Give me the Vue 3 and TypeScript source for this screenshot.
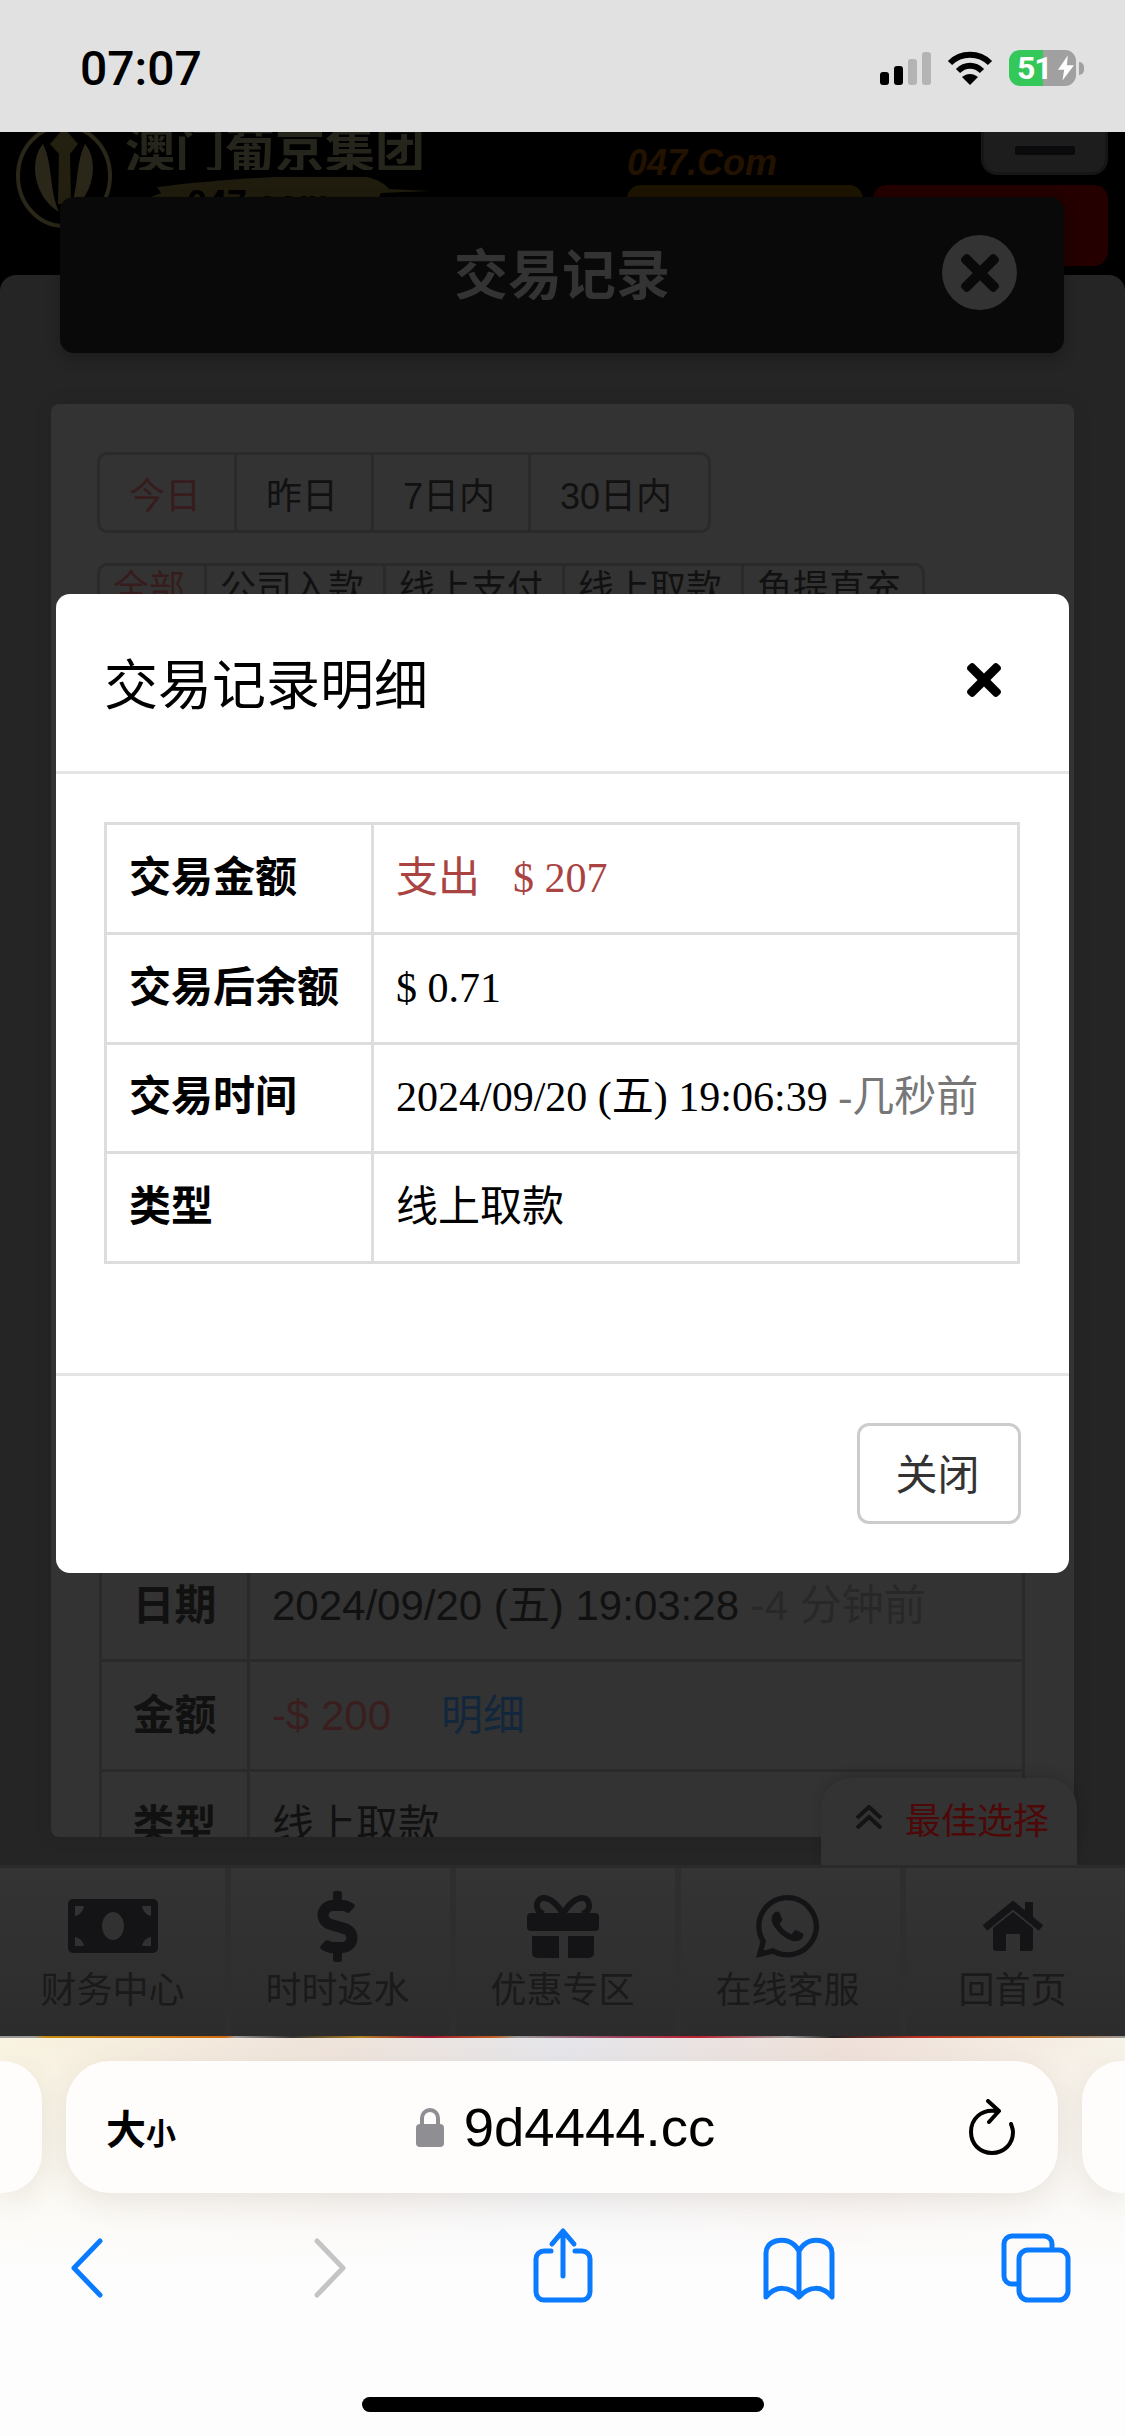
<script setup lang="ts">
const rangeTabs = ['今日', '昨日', '7日内', '30日内']
const typeTabs = ['全部', '公司入款', '线上支付', '线上取款', '鱼提直充']

const navItems = [
  { key: 'money', label: '财务中心' },
  { key: 'dollar', label: '时时返水' },
  { key: 'gift', label: '优惠专区' },
  { key: 'whatsapp', label: '在线客服' },
  { key: 'home', label: '回首页' }
]

const timesPath =
  'M242.72 256l100.07-100.07c12.28-12.28 12.28-32.19 0-44.48l-22.24-22.24c-12.28-12.28-32.19-12.28-44.48 0L176 189.28 75.93 89.21c-12.28-12.28-32.19-12.28-44.48 0L9.21 111.45c-12.28 12.28-12.28 32.19 0 44.48L109.28 256 9.21 356.07c-12.28 12.28-12.28 32.19 0 44.48l22.24 22.24c12.28 12.28 32.2 12.28 44.48 0L176 322.72l100.07 100.07c12.28 12.28 32.2 12.28 44.48 0l22.24-22.24c12.28-12.28 12.28-32.19 0-44.48L242.72 256z'
</script>

<template>
  <div class="phone">
    <div class="status-bar">
      <span class="clock">07:07</span>
      <div class="status-icons">
        <svg class="signal" width="52" height="33" viewBox="0 0 52 33">
          <rect x="0" y="20" width="9" height="13" rx="3" fill="#000" />
          <rect x="14" y="14" width="9" height="19" rx="3" fill="#000" />
          <rect x="28" y="7" width="9" height="26" rx="3" fill="#b4b4b4" />
          <rect x="42" y="0" width="9" height="33" rx="3" fill="#b4b4b4" />
        </svg>
        <svg class="wifi" width="46" height="34" viewBox="0 0 46 34" fill="none" stroke="#000" stroke-width="6">
          <path d="M3 12 C14 1 32 1 43 12" />
          <path d="M11 20 C18 13 28 13 35 20" />
          <path d="M23 34 L15 26 C20 22 26 22 31 26 Z" fill="#000" stroke="none" />
        </svg>
        <div class="battery">
          <div class="battery-level">
            <span class="battery-text">51</span>
            <svg class="bolt" width="16" height="28" viewBox="0 0 18 28">
              <path d="M11 0 L0 16 H7 L5 28 L18 11 H10 Z" fill="#fff" />
            </svg>
          </div>
          <span class="battery-nub"></span>
        </div>
      </div>
    </div>

    <div class="page">
      <header class="site-header">
        <div class="brand">
          <svg class="emblem" width="100" height="106" viewBox="0 0 100 106" fill="none">
            <ellipse cx="49" cy="52" rx="46" ry="50" stroke="#2a2618" stroke-width="4" />
            <path d="M49 4 L63 20 L55 30 L56 80 L43 80 L44 30 L35 20 Z" fill="#24200f" />
            <path d="M28 20 C14 36 18 72 44 88 C34 66 38 40 28 20 Z" fill="#2a2618" />
            <path d="M70 20 C84 36 80 72 54 88 C64 66 60 40 70 20 Z" fill="#2a2618" />
          </svg>
          <div class="brand-text">
            <div class="brand-name">澳门葡京集团</div>
            <svg class="swoosh" width="300" height="44" viewBox="0 0 300 44">
              <path d="M26 10 C90 2 180 -4 236 0 C246 2 256 8 258 12 L300 14 L250 16 L240 36 H24 L34 22 L20 20 L30 16 Z" fill="#1f1c0d" />
              <text x="56" y="39" class="swoosh-text">047.com</text>
            </svg>
          </div>
        </div>
        <div class="promo">
          <div class="promo-top">
            <span class="promo-url">047.Com</span>
            <div class="menu-btn"><i></i></div>
          </div>
          <div class="promo-btns">
            <span class="promo-btn yellow"></span>
            <span class="promo-btn red"></span>
          </div>
        </div>
      </header>

      <main class="content">
        <div class="title-bar">
          <span class="title-text">交易记录</span>
          <span class="title-close">
            <svg width="38" height="38" viewBox="0 80 352 352"><path :d="timesPath" fill="#0a090a" /></svg>
          </span>
        </div>

        <section class="panel">
          <div class="tabs">
            <span v-for="(t, i) in rangeTabs" :key="t" class="tab" :class="{ active: i === 0 }">{{ t }}</span>
          </div>
          <div class="tabs types">
            <span v-for="(t, i) in typeTabs" :key="t" class="tab" :class="{ active: i === 0 }">{{ t }}</span>
          </div>

          <table class="record">
            <tbody>
              <tr>
                <th>日期</th>
                <td>2024/09/20 (五) 19:03:28 <span class="muted">-4 分钟前</span></td>
              </tr>
              <tr>
                <th>金额</th>
                <td><span class="minus">-$ 200</span><span class="detail-link">明细</span></td>
              </tr>
              <tr>
                <th>类型</th>
                <td>线上取款</td>
              </tr>
            </tbody>
          </table>
        </section>

        <div class="best-tab">
          <svg width="26" height="24" viewBox="0 0 26 24" fill="none" stroke="#141414" stroke-width="4">
            <path d="M1 13 L13 2 L25 13" />
            <path d="M1 23 L13 12 L25 23" />
          </svg>
          <span>最佳选择</span>
        </div>
      </main>

      <nav class="bottom-nav">
        <a v-for="item in navItems" :key="item.key" class="nav-item">
          <span class="nav-icon">
            <svg v-if="item.key === 'money'" width="90" height="54" viewBox="0 0 90 54">
              <path
                fill-rule="evenodd"
                fill="#141416"
                d="M5 0 H85 a5 5 0 0 1 5 5 V49 a5 5 0 0 1 -5 5 H5 a5 5 0 0 1 -5 -5 V5 a5 5 0 0 1 5 -5 Z
                   M45 13 a11 14 0 1 0 0.01 0 Z
                   M7 7 V17 C12 16 15 12 16 7 Z
                   M83 7 V17 C78 16 75 12 74 7 Z
                   M7 47 V38 C12 39 15 42 16 47 Z
                   M83 47 V38 C78 39 75 42 74 47 Z"
              />
            </svg>
            <svg v-else-if="item.key === 'dollar'" width="41" height="71" viewBox="0 0 288 512">
              <path
                fill="#141416"
                d="M209.2 233.4l-108-31.6C88.7 198.2 80 186.5 80 173.5c0-16.3 13.2-29.5 29.5-29.5h66.3c12.2 0 24.2 3.7 34.2 10.5 6.1 4.1 14.3 3.1 19.5-2l34.8-34c7.1-6.9 6.1-18.4-1.8-24.5C238 74.8 207.4 64.1 176 64V16c0-8.8-7.2-16-16-16h-32c-8.8 0-16 7.2-16 16v48h-2.5C45.8 64-5.4 118.7.5 183.6c4.2 46.1 39.4 83.6 83.8 96.6l102.5 30c12.5 3.7 21.2 15.3 21.2 28.3 0 16.3-13.2 29.5-29.5 29.5h-66.3C100 368 88 364.3 78 357.5c-6.1-4.1-14.3-3.1-19.5 2l-34.8 34c-7.1 6.9-6.1 18.4 1.8 24.5 24.5 19.2 55.1 29.9 86.5 30v48c0 8.8 7.2 16 16 16h32c8.8 0 16-7.2 16-16v-48.2c46.6-.9 90.3-28.6 105.7-72.7 21.5-61.6-14.6-124.8-72.5-141.7z"
              />
            </svg>
            <svg v-else-if="item.key === 'gift'" width="72" height="63" viewBox="0 0 72 63">
              <path d="M36 19 C30 8 22 3 17 3 C8 3 7 17 17 19 M36 19 C42 8 50 3 55 3 C64 3 65 17 55 19" fill="none" stroke="#141416" stroke-width="6" />
              <rect x="0" y="18" width="72" height="18" rx="4" fill="#141416" />
              <path d="M5 41 H32 V63 H10 a5 5 0 0 1 -5 -5 Z" fill="#141416" />
              <path d="M41 41 H67 V58 a5 5 0 0 1 -5 5 H41 Z" fill="#141416" />
            </svg>
            <svg v-else-if="item.key === 'whatsapp'" width="63" height="63" viewBox="0 32 448 448">
              <path
                fill="#141416"
                d="M380.9 97.1C339 55.1 283.2 32 223.9 32c-122.4 0-222 99.6-222 222 0 39.1 10.2 77.3 29.6 111L0 480l117.7-30.9c32.4 17.7 68.9 27 106.1 27h.1c122.3 0 224.1-99.6 224.1-222 0-59.3-25.2-115-67.1-157zm-157 341.6c-33.2 0-65.7-8.9-94-25.7l-6.7-4-69.8 18.3L72 359.2l-4.4-7c-18.5-29.4-28.2-63.3-28.2-98.2 0-101.7 82.8-184.5 184.6-184.5 49.3 0 95.6 19.2 130.4 54.1 34.8 34.9 56.2 81.2 56.1 130.5 0 101.8-84.9 184.6-186.6 184.6zm101.2-138.2c-5.5-2.8-32.8-16.2-37.9-18-5.1-1.9-8.8-2.8-12.5 2.8-3.7 5.6-14.3 18-17.6 21.8-3.2 3.7-6.5 4.2-12 1.4-32.6-16.3-54-29.1-75.5-66-5.7-9.8 5.7-9.1 16.3-30.3 1.8-3.7.9-6.9-.5-9.7-1.4-2.8-12.5-30.1-17.1-41.2-4.5-10.8-9.1-9.3-12.5-9.5-3.2-.2-6.9-.2-10.6-.2-3.7 0-9.7 1.4-14.8 6.9-5.1 5.6-19.4 19-19.4 46.3 0 27.3 19.9 53.7 22.6 57.4 2.8 3.7 39.1 59.7 94.8 83.8 35.2 15.2 49 16.5 66.6 13.9 10.7-1.6 32.8-13.4 37.4-26.4 4.6-13 4.6-24.1 3.2-26.4-1.3-2.5-5-3.9-10.5-6.6z"
              />
            </svg>
            <svg v-else width="62" height="50" viewBox="0 0 62 50">
              <rect x="43" y="1" width="8" height="16" fill="#141416" />
              <path d="M3 27 L31 4 L59 27" fill="none" stroke="#141416" stroke-width="7" />
              <path d="M11 27 L31 11 L51 27 V47 a3 3 0 0 1 -3 3 H38 V33 H24 V50 H14 a3 3 0 0 1 -3 -3 Z" fill="#141416" />
            </svg>
          </span>
          <span class="nav-label">{{ item.label }}</span>
        </a>
      </nav>
      <div class="peek-strip"></div>

      <div class="modal">
        <div class="modal-header">
          <span class="modal-title">交易记录明细</span>
          <svg class="modal-close" width="34" height="34" viewBox="0 80 352 352"><path :d="timesPath" fill="#000" /></svg>
        </div>
        <div class="modal-body">
          <table class="detail">
            <tbody>
              <tr>
                <th>交易金额</th>
                <td class="danger"><span class="out">支出</span>$ 207</td>
              </tr>
              <tr>
                <th>交易后余额</th>
                <td>$ 0.71</td>
              </tr>
              <tr>
                <th>交易时间</th>
                <td>2024/09/20 (五) 19:06:39 <span class="ago">-几秒前</span></td>
              </tr>
              <tr>
                <th>类型</th>
                <td>线上取款</td>
              </tr>
            </tbody>
          </table>
        </div>
        <div class="modal-footer">
          <button class="close-btn" type="button">关闭</button>
        </div>
      </div>
    </div>

    <div class="browser">
      <div class="url-row">
        <span class="side-card left"></span>
        <div class="url-bar">
          <span class="aa">大<small>小</small></span>
          <span class="address">
            <svg width="28" height="39" viewBox="0 0 28 39" fill="none">
              <path d="M6 18 V10 a8 8 0 0 1 16 0 V18" stroke="#8e8e93" stroke-width="4" />
              <rect x="0" y="16" width="28" height="23" rx="4" fill="#8e8e93" />
            </svg>
            <span class="host">9d4444.cc</span>
          </span>
          <svg class="reload" width="46" height="56" viewBox="0 0 46 56" fill="none" stroke="#000" stroke-width="4" stroke-linecap="round" stroke-linejoin="round">
            <path d="M27 12 C12 10 2 20 2 33 C2 45 11 54 23 54 C35 54 44 45 44 33 C44 30 43 28 42 25" />
            <path d="M19 2 L30 12 L20 23" />
          </svg>
        </div>
        <span class="side-card right"></span>
      </div>

      <div class="toolbar">
        <svg width="80" height="80" viewBox="0 0 80 80" fill="none" stroke="#0a7aff" stroke-width="5" stroke-linecap="round" stroke-linejoin="round">
          <path d="M53 13 L27 40 L53 67" transform="translate(0 2)" />
        </svg>
        <svg width="80" height="80" viewBox="0 0 80 80" fill="none" stroke="#c4c4c4" stroke-width="5" stroke-linecap="round" stroke-linejoin="round">
          <path d="M32 13 L58 40 L32 67" transform="translate(0 2)" />
        </svg>
        <svg width="80" height="80" viewBox="0 0 80 80" fill="none" stroke="#0a7aff" stroke-width="5" stroke-linecap="round" stroke-linejoin="round">
          <path d="M28 25 H21 a8 8 0 0 0 -8 8 V66 a8 8 0 0 0 8 8 H59 a8 8 0 0 0 8 -8 V33 a8 8 0 0 0 -8 -8 H52" />
          <path d="M40 50 V6 M29 18 L40 5 L51 18" />
        </svg>
        <svg width="80" height="80" viewBox="0 0 80 80" fill="none" stroke="#0a7aff" stroke-width="5" stroke-linejoin="round">
          <path d="M38 25 V70 M38 25 C32 14 22 13 15 15 C8 17 5 22 5 27 V71 C15 59 28 60 38 71 C48 60 61 59 71 71 V27 C71 22 68 17 61 15 C54 13 44 14 38 25 Z" />
        </svg>
        <svg width="80" height="80" viewBox="6 0 80 80" fill="none" stroke="#0a7aff" stroke-width="5">
          <path d="M24 58 H19 a8 8 0 0 1 -8 -8 V18 a8 8 0 0 1 8 -8 H51 a8 8 0 0 1 8 8 V24" />
          <rect x="26" y="24" width="49" height="50" rx="9" />
        </svg>
      </div>

      <div class="home-bar"></div>
    </div>
  </div>
</template>

<style>
html,
body {
  margin: 0;
  background: #fff;
}
</style>

<style scoped>
.phone {
  position: relative;
  width: 1125px;
  height: 2436px;
  overflow: hidden;
  display: flex;
  flex-direction: column;
  font-family: "Liberation Sans", "Noto Sans CJK SC", sans-serif;
}

.status-bar {
  height: 132px;
  flex-shrink: 0;
  background: #e1e1e1;
  display: flex;
  align-items: center;
  justify-content: space-between;
  padding: 0 41px 0 80px;
  box-sizing: border-box;
}

.clock {
  font-family: Roboto, sans-serif;
  font-weight: 500;
  font-size: 48px;
  color: #000;
  margin-top: 4px;
}

.status-icons {
  display: flex;
  align-items: center;
  margin-top: 4px;
}

.signal {
  margin-right: 15px;
}

.wifi {
  margin-right: 16px;
}

.battery {
  display: flex;
  align-items: center;
  gap: 3px;
}

.battery-level {
  width: 67px;
  height: 36px;
  border-radius: 11px;
  background: linear-gradient(90deg, #34c759 34px, #a0a0a0 34px);
  display: flex;
  align-items: center;
  padding-left: 8px;
  box-sizing: border-box;
}

.battery-text {
  font-family: Roboto, sans-serif;
  font-weight: 700;
  font-size: 32px;
  letter-spacing: -1px;
  line-height: 36px;
  color: #fff;
}

.bolt {
  margin-left: 6px;
}

.battery-nub {
  width: 5px;
  height: 13px;
  border-radius: 0 6px 6px 0;
  background: #a0a0a0;
}

.page {
  position: relative;
  flex: 1;
  min-height: 0;
  display: flex;
  flex-direction: column;
  background: #000;
}

.site-header {
  height: 143px;
  flex-shrink: 0;
  overflow: hidden;
  display: flex;
  justify-content: space-between;
  padding: 0 17px 0 15px;
  box-sizing: border-box;
}

.brand {
  display: flex;
  gap: 10px;
}

.emblem {
  margin-top: -8px;
}

.brand-name {
  width: 300px;
  height: 38px;
  font-size: 50px;
  line-height: 38px;
  font-weight: 700;
  color: #26251c;
  white-space: nowrap;
  overflow: hidden;
  display: flex;
  align-items: flex-end;
}

.swoosh {
  display: block;
  margin: 7px 0 0 6px;
}

.swoosh-text {
  font-family: "Liberation Sans", sans-serif;
  font-weight: 700;
  font-size: 36px;
  fill: #000;
}

.promo {
  width: 481px;
}

.promo-top {
  height: 53px;
  display: flex;
  justify-content: space-between;
  align-items: flex-start;
}

.promo-url {
  font-size: 36px;
  font-weight: 700;
  font-style: italic;
  line-height: 36px;
  margin-top: 13px;
  color: #241200;
}

.menu-btn {
  width: 127px;
  height: 43px;
  background: #1d1d1d;
  border: 3px solid #161616;
  border-top: 0;
  border-radius: 0 0 16px 16px;
  box-sizing: border-box;
  display: flex;
  flex-direction: column;
  justify-content: flex-end;
  align-items: center;
  padding-bottom: 17px;
}

.menu-btn i {
  width: 60px;
  height: 9px;
  border-radius: 2px;
  background: #0a0a0c;
}

.promo-btns {
  display: flex;
  gap: 10px;
}

.promo-btn {
  flex: 1;
  height: 81px;
  border-radius: 14px;
}

.promo-btn.yellow {
  background: #1c1400;
}

.promo-btn.red {
  background: #240000;
}

.content {
  position: relative;
  flex: 1;
  min-height: 0;
  background: #252525;
  border-radius: 16px 16px 0 0;
  display: flex;
  flex-direction: column;
}

.title-bar {
  height: 156px;
  margin: -78px 61px 0 60px;
  flex-shrink: 0;
  box-sizing: border-box;
  padding-bottom: 8px;
  background: #0a090a;
  border-radius: 14px;
  box-shadow: 0 6px 14px rgba(0, 0, 0, 0.25);
  display: flex;
  align-items: center;
  justify-content: center;
  position: relative;
}

.title-text {
  font-size: 54px;
  font-weight: 700;
  color: #333;
}

.title-close {
  position: absolute;
  right: 47px;
  top: 38px;
  width: 75px;
  height: 75px;
  border-radius: 50%;
  background: #333;
  display: flex;
  align-items: center;
  justify-content: center;
}

.panel {
  height: 1433px;
  margin: 51px 51px 0;
  flex-shrink: 0;
  box-sizing: border-box;
  padding: 48px 49px 0 46px;
  background: #333;
  border-radius: 8px;
  overflow: hidden;
  box-shadow: 0 0 20px rgba(0, 0, 0, 0.08);
}

.tabs {
  display: inline-flex;
  border: 3px solid #2a2a2a;
  border-radius: 10px;
  height: 81px;
  box-sizing: border-box;
  vertical-align: top;
}

.tab {
  display: flex;
  align-items: center;
  padding: 0 33px 0 29px;
  font-size: 36px;
  color: #111;
  border-left: 3px solid #2a2a2a;
}

.tab:first-child {
  border-left: 0;
}

.tab:last-child {
  padding-right: 36px;
}

.tab.active {
  color: #361c1c;
}

.types {
  display: flex;
  width: 828px;
  margin-top: 30px;
}

.types .tab {
  align-items: flex-start;
  padding: 5px 19px 0 13px;
  line-height: 36px;
  white-space: nowrap;
}

.record {
  width: 926px;
  margin: 905px 0 0 2px;
  border-collapse: collapse;
  font-size: 42px;
  color: #111;
}

.record th,
.record td {
  height: 110px;
  padding: 0 0 8px;
  border: 3px solid #2a2a2a;
  box-sizing: border-box;
}

.record th {
  width: 148px;
  text-align: center;
  font-weight: 700;
}

.record td {
  padding-left: 22px;
}

.muted {
  color: #282828;
}

.minus {
  color: #3a1e1e;
}

.detail-link {
  color: #12273c;
  margin-left: 50px;
}

.best-tab {
  position: absolute;
  left: 821px;
  bottom: 0;
  width: 256px;
  height: 87px;
  box-sizing: border-box;
  padding: 0 0 0 35px;
  display: flex;
  align-items: center;
  gap: 23px;
  background: #333;
  border-radius: 30px 30px 0 0;
  box-shadow: 0 -3px 12px rgba(0, 0, 0, 0.15);
  font-size: 36px;
  color: #4e0808;
}

.best-tab svg {
  margin-top: -10px;
}

.best-tab span {
  margin-top: -8px;
}

.bottom-nav {
  height: 171px;
  flex-shrink: 0;
  background: #2a2a2a;
  padding-top: 3px;
  box-sizing: border-box;
  display: grid;
  grid-template-columns: repeat(5, 225px);
  position: relative;
}

.nav-item {
  display: flex;
  flex-direction: column;
  align-items: center;
  background: linear-gradient(#343434, #2c2c2c);
}

.nav-item + .nav-item {
  box-shadow: inset 6px 0 #2e2e2e;
}

.nav-icon {
  height: 100px;
  display: flex;
  align-items: center;
  justify-content: center;
  margin-top: 8px;
}

.nav-label {
  font-size: 36px;
  line-height: 50px;
  margin-top: -10px;
  color: #1a1a1a;
}

.peek-strip {
  height: 2px;
  flex-shrink: 0;
  background: linear-gradient(90deg, #999 3%, #c58a10 4%, #d06a10 20%, #999 21%, #333 26%, #b08020 32%, #a01030 38%, #c06020 44%, #999 46%, #a04060 55%, #c02030 62%, #999 70%, #222 74%, #c03020 82%, #c07020 92%, #999 100%);
}

.modal {
  position: absolute;
  left: 56px;
  top: 462px;
  width: 1013px;
  height: 979px;
  background: #fff;
  border-radius: 14px;
  display: flex;
  flex-direction: column;
  color: #000;
}

.modal-header {
  height: 180px;
  flex-shrink: 0;
  box-sizing: border-box;
  border-bottom: 3px solid #e5e5e5;
  padding: 0 68px 0 48px;
  display: flex;
  align-items: center;
  justify-content: space-between;
}

.modal-title {
  font-size: 54px;
  margin-top: -3px;
}

.modal-close {
  margin-top: -5px;
}

.modal-body {
  flex: 1;
  padding: 48px 49px 0 48px;
}

.detail {
  width: 916px;
  border-collapse: collapse;
  font-family: "Liberation Serif", "Noto Sans CJK SC", serif;
  font-size: 42px;
}

.detail th,
.detail td {
  height: 109.75px;
  padding: 0 0 1px 22px;
  border: 3px solid #ddd;
  box-sizing: border-box;
  line-height: 60px;
  text-align: left;
  white-space: nowrap;
}

.detail th {
  width: 267px;
  font-family: "Liberation Sans", "Noto Sans CJK SC", sans-serif;
  font-weight: 700;
}

.danger {
  color: #a94442;
}

.out {
  margin-right: 33px;
}

.ago {
  color: #777;
}

.modal-footer {
  height: 200px;
  flex-shrink: 0;
  box-sizing: border-box;
  border-top: 3px solid #e5e5e5;
  padding: 47px 48px 0 0;
  display: flex;
  justify-content: flex-end;
  align-items: flex-start;
}

.close-btn {
  width: 164px;
  height: 101px;
  background: #fff;
  border: 3px solid #ccc;
  border-radius: 12px;
  font-family: "Liberation Sans", "Noto Sans CJK SC", sans-serif;
  font-size: 42px;
  color: #333;
  padding: 0 3px 4px 0;
}

.browser {
  height: 398px;
  flex-shrink: 0;
  box-sizing: border-box;
  padding-top: 23px;
  background:
    linear-gradient(rgba(253, 253, 253, 0) 0, #fdfdfd 230px),
    linear-gradient(90deg, #f9f3e0 0, #efe3da 30%, #e5e5ea 50%, #efe0d8 75%, #f7f2e8 100%);
}

.url-row {
  display: flex;
  gap: 24px;
  height: 132px;
}

.side-card {
  flex-shrink: 0;
  background: #fefdfb;
  box-shadow: 0 8px 30px rgba(80, 60, 40, 0.1);
}

.side-card.left {
  width: 42px;
  border-radius: 0 40px 40px 0;
}

.side-card.right {
  width: 43px;
  border-radius: 40px 0 0 40px;
}

.url-bar {
  width: 992px;
  flex-shrink: 0;
  box-sizing: border-box;
  background: #fefdfc;
  border-radius: 44px;
  box-shadow: 0 8px 30px rgba(80, 60, 40, 0.1);
  padding: 0 43px 0 40px;
  display: flex;
  align-items: center;
  justify-content: space-between;
}

.aa {
  font-size: 40px;
  font-weight: 700;
  color: #000;
  width: 56px;
  white-space: nowrap;
  font-family: "Noto Sans CJK SC", sans-serif;
}

.aa small {
  font-size: 30px;
}

.address {
  display: flex;
  align-items: center;
  gap: 20px;
}

.host {
  font-size: 54.5px;
  color: #000;
}

.toolbar {
  display: grid;
  grid-template-columns: repeat(5, 238px);
  justify-content: center;
  justify-items: center;
  height: 80px;
  margin-top: 33px;
}

.home-bar {
  width: 402px;
  height: 15px;
  border-radius: 8px;
  background: #000;
  margin: 91px auto 0;
}
</style>
